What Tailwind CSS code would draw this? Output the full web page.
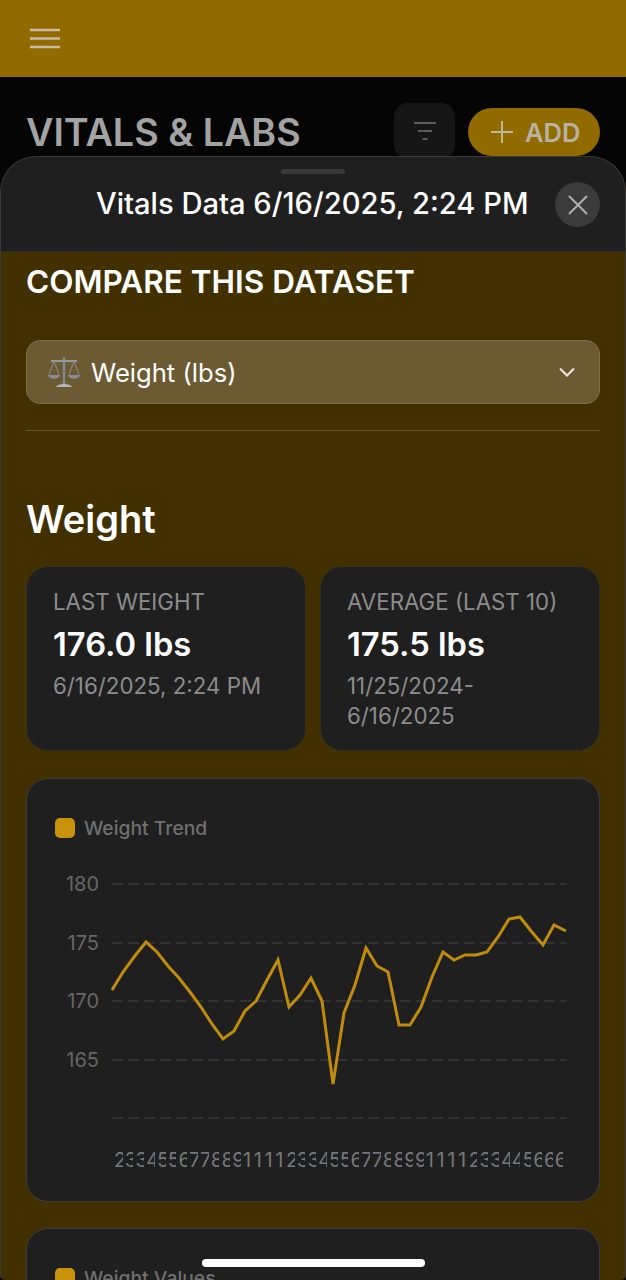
<!DOCTYPE html>
<html>
<head>
  <title>Vitals & Labs</title>
  <script src="https://cdn.jsdelivr.net/npm/@tailwindcss/browser@4"></script>
</head>
<body class="relative w-[626px] h-[1280px] overflow-hidden bg-[#050505] font-['Inter',sans-serif]">
  <!-- Top bar -->
  <div class="h-[77px] bg-[#916a00] flex items-center px-[30px]">
    <svg class="w-[30px] h-[22px]" viewBox="0 0 30 22" fill="none" stroke="#c6bda6" stroke-width="2.4">
      <path d="M0 2H30M0 10.500H30M0 19H30"/>
    </svg>
  </div>

  <!-- Page behind the sheet -->
  <div class="flex items-start justify-between pl-[26px] pr-[26px] pt-[26px]">
    <h1 class="text-[37.700px] leading-[58px] font-semibold text-[#a3a3a3]">VITALS &amp; LABS</h1>
    <div class="flex items-start gap-[13px]">
      <div class="w-[61px] h-[56px] rounded-[14px] bg-[#161616] flex items-center justify-center">
        <svg class="w-[22px] h-[20px]" viewBox="0 0 22 20" fill="none" stroke="#5c5c5c" stroke-width="2">
          <path d="M0 2H22M4 10H18M8.500 18H13.500"/>
        </svg>
      </div>
      <div class="mt-[5px] w-[132px] h-[48px] rounded-full bg-[#916a00] flex items-center pl-[23px] gap-[12px]">
        <svg class="w-[22px] h-[22px]" viewBox="0 0 22 22" fill="none" stroke="#bdb5a0" stroke-width="2">
          <path d="M11 0V22M0 11H22"/>
        </svg>
        <span class="pt-[2px] text-[25.500px] font-semibold text-[#b8b2a2]">ADD</span>
      </div>
    </div>
  </div>

  <!-- Bottom sheet -->
  <div class="absolute left-0 right-0 top-[156px] bottom-0 rounded-t-[36px] rounded-b-[5px] overflow-hidden border-x border-t border-[#3a3a3a] bg-[#423000]">
    <div class="relative h-[95px] bg-[#1f1f20] border-b border-[#2c2c2c]">
      <div class="absolute left-[280px] top-[12px] w-[64px] h-[5px] rounded-full bg-[#3a3a3a]"></div>
      <div class="absolute left-[95px] top-[28px] text-[29.150px] leading-[38px] font-medium text-white whitespace-nowrap">Vitals Data 6/16/2025, 2:24 PM</div>
      <div class="absolute left-[554px] top-[25px] w-[45px] h-[45px] rounded-full bg-[#3b3b3c] flex items-center justify-center">
        <svg class="w-[20px] h-[20px]" viewBox="0 0 20 20" fill="none" stroke="#b0b0b0" stroke-width="2">
          <path d="M1 1L19 19M19 1L1 19"/>
        </svg>
      </div>
    </div>

    <div class="px-[25px]">
      <h2 class="mt-[10px] text-[31.500px] leading-[40px] font-semibold text-white whitespace-nowrap">COMPARE THIS DATASET</h2>

      <div class="mt-[38px] h-[64px] rounded-[14px] bg-[#6b5a32] border border-[#7f7048] flex items-center pl-[21px] pr-[24px]">
        <svg class="w-[32px] h-[34px] shrink-0" viewBox="0 0 32 34" fill="none">
          <path d="M16 2V29" stroke="#7f8a92" stroke-width="2.500"/>
          <path d="M3 6H29" stroke="#949ca0" stroke-width="2"/>
          <path d="M6 6L1 20M6 6L11 20M26 6L21 20M26 6L31 20" stroke="#8d8f86" stroke-width="1"/>
          <path d="M0 20H12C11 25 1 25 0 20ZM20 20H32C31 25 21 25 20 20Z" fill="#848f98"/>
          <path d="M8 32C9 28 23 28 24 32Z" fill="#aeb5ba"/>
        </svg>
        <span class="ml-[11px] pt-[2px] text-[25.600px] leading-[34px] text-white">Weight (lbs)</span>
        <svg class="ml-auto w-[16px] h-[10px]" viewBox="0 0 16 10" fill="none" stroke="#e8e4da" stroke-width="2.200">
          <path d="M1 1.500L8 8.500L15 1.500"/>
        </svg>
      </div>

      <div class="mt-[26px] h-[1px] bg-[#6b5a30]"></div>

      <h2 class="mt-[63px] text-[38px] leading-[50px] font-semibold text-white">Weight</h2>

      <div class="mt-[22px] grid grid-cols-2 gap-[14px]">
        <div class="h-[185px] rounded-[22px] bg-[#1f1f20] border border-[#33301f] px-[26px] pt-[20px]">
          <div class="text-[22.300px] leading-[30px] text-[#8c8c8c]">LAST WEIGHT</div>
          <div class="mt-[7px] text-[32.700px] leading-[40px] font-semibold text-white">176.0 lbs</div>
          <div class="mt-[7px] text-[22.300px] leading-[30px] text-[#8c8c8c]">6/16/2025, 2:24 PM</div>
        </div>
        <div class="h-[185px] rounded-[22px] bg-[#1f1f20] border border-[#33301f] px-[26px] pt-[20px]">
          <div class="text-[22.300px] leading-[30px] text-[#8c8c8c] whitespace-nowrap">AVERAGE (LAST 10)</div>
          <div class="mt-[7px] text-[32.700px] leading-[40px] font-semibold text-white">175.5 lbs</div>
          <div class="mt-[7px] text-[22.300px] leading-[30px] text-[#8c8c8c]">11/25/2024-<br>6/16/2025</div>
        </div>
      </div>

      <!-- Trend chart -->
      <div class="mt-[27px] h-[424px] rounded-[22px] bg-[#1f1f20] border border-[#3c3c3c] pt-[37px]">
        <div class="flex items-center pl-[28px] gap-[9px]">
          <div class="w-[20px] h-[20px] rounded-[5px] bg-[#c8920a]"></div>
          <span class="text-[19.300px] leading-[24px] font-medium text-[#6f6f6f]">Weight Trend</span>
        </div>
        <svg class="mt-[-4px] block" width="572" height="292" viewBox="27 836 572 292">
          <g stroke="#3a3a3a" stroke-width="1.500" stroke-dasharray="11 5">
            <path d="M112 884H567M112 943H567M112 1001H567M112 1060H567M112 1118H567"/>
          </g>
          <g fill="#666666" font-size="20" text-anchor="end" font-family="Inter, sans-serif">
            <text x="99" y="891">180</text>
            <text x="99" y="950">175</text>
            <text x="99" y="1008">170</text>
            <text x="99" y="1067">165</text>
          </g>
          <polyline fill="none" stroke="#c08c0e" stroke-width="3" stroke-linejoin="miter" points="112,990 123,972 134,957 146,942 157,952 168,966 179,978 190,992 201,1007 212,1024 223,1039 234,1031 245,1011 256,1001 267,980 278,960 289,1007 300,995 311,978 322,1001 333,1084 344,1013 355,985 366,948 377,966 388,972 399,1025 410,1025 421,1007 432,977 443,952 454,960 465,955 476,955 487,952 498,937 509,919 520,917 531,931 543,945 554,925 566,931"/>
        </svg>
        <div class="mt-[20px] ml-[87px] flex text-[20px] leading-[24px] text-[#777777]">
          <span class="w-[8.500px] mr-[2.260px] overflow-hidden">2</span>
          <span class="w-[8.500px] mr-[2.260px] overflow-hidden">3</span>
          <span class="w-[8.500px] mr-[2.260px] overflow-hidden">3</span>
          <span class="w-[8.500px] mr-[2.260px] overflow-hidden">4</span>
          <span class="w-[8.500px] mr-[2.260px] overflow-hidden">5</span>
          <span class="w-[8.500px] mr-[2.260px] overflow-hidden">5</span>
          <span class="w-[8.500px] mr-[2.260px] overflow-hidden">6</span>
          <span class="w-[8.500px] mr-[2.260px] overflow-hidden">7</span>
          <span class="w-[8.500px] mr-[2.260px] overflow-hidden">7</span>
          <span class="w-[8.500px] mr-[2.260px] overflow-hidden">8</span>
          <span class="w-[8.500px] mr-[2.260px] overflow-hidden">8</span>
          <span class="w-[8.500px] mr-[2.260px] overflow-hidden">9</span>
          <span class="w-[8.500px] mr-[2.260px] overflow-hidden">1</span>
          <span class="w-[8.500px] mr-[2.260px] overflow-hidden">1</span>
          <span class="w-[8.500px] mr-[2.260px] overflow-hidden">1</span>
          <span class="w-[8.500px] mr-[2.260px] overflow-hidden">1</span>
          <span class="w-[8.500px] mr-[2.260px] overflow-hidden">2</span>
          <span class="w-[8.500px] mr-[2.260px] overflow-hidden">3</span>
          <span class="w-[8.500px] mr-[2.260px] overflow-hidden">3</span>
          <span class="w-[8.500px] mr-[2.260px] overflow-hidden">4</span>
          <span class="w-[8.500px] mr-[2.260px] overflow-hidden">5</span>
          <span class="w-[8.500px] mr-[2.260px] overflow-hidden">5</span>
          <span class="w-[8.500px] mr-[2.260px] overflow-hidden">6</span>
          <span class="w-[8.500px] mr-[2.260px] overflow-hidden">7</span>
          <span class="w-[8.500px] mr-[2.260px] overflow-hidden">7</span>
          <span class="w-[8.500px] mr-[2.260px] overflow-hidden">8</span>
          <span class="w-[8.500px] mr-[2.260px] overflow-hidden">8</span>
          <span class="w-[8.500px] mr-[2.260px] overflow-hidden">9</span>
          <span class="w-[8.500px] mr-[2.260px] overflow-hidden">9</span>
          <span class="w-[8.500px] mr-[2.260px] overflow-hidden">1</span>
          <span class="w-[8.500px] mr-[2.260px] overflow-hidden">1</span>
          <span class="w-[8.500px] mr-[2.260px] overflow-hidden">1</span>
          <span class="w-[8.500px] mr-[2.260px] overflow-hidden">1</span>
          <span class="w-[8.500px] mr-[2.260px] overflow-hidden">2</span>
          <span class="w-[8.500px] mr-[2.260px] overflow-hidden">3</span>
          <span class="w-[8.500px] mr-[2.260px] overflow-hidden">3</span>
          <span class="w-[8.500px] mr-[2.260px] overflow-hidden">4</span>
          <span class="w-[8.500px] mr-[2.260px] overflow-hidden">4</span>
          <span class="w-[8.500px] mr-[2.260px] overflow-hidden">5</span>
          <span class="w-[8.500px] mr-[2.260px] overflow-hidden">6</span>
          <span class="w-[8.500px] mr-[2.260px] overflow-hidden">6</span>
          <span class="w-[8.500px] mr-[2.260px] overflow-hidden">6</span>
        </div>
      </div>

      <!-- Values card, cut off by the screen edge -->
      <div class="mt-[26px] h-[200px] rounded-[22px] bg-[#1f1f20] border border-[#3c3c3c] pt-[37px]">
        <div class="flex items-center pl-[28px] gap-[9px]">
          <div class="w-[20px] h-[20px] rounded-[5px] bg-[#c8920a]"></div>
          <span class="text-[19.300px] leading-[24px] font-medium text-[#6f6f6f]">Weight Values</span>
        </div>
      </div>
    </div>
  </div>

  <!-- Home indicator -->
  <div class="absolute left-[202px] top-[1259px] w-[223px] h-[8px] rounded-full bg-white"></div>
</body>
</html>
